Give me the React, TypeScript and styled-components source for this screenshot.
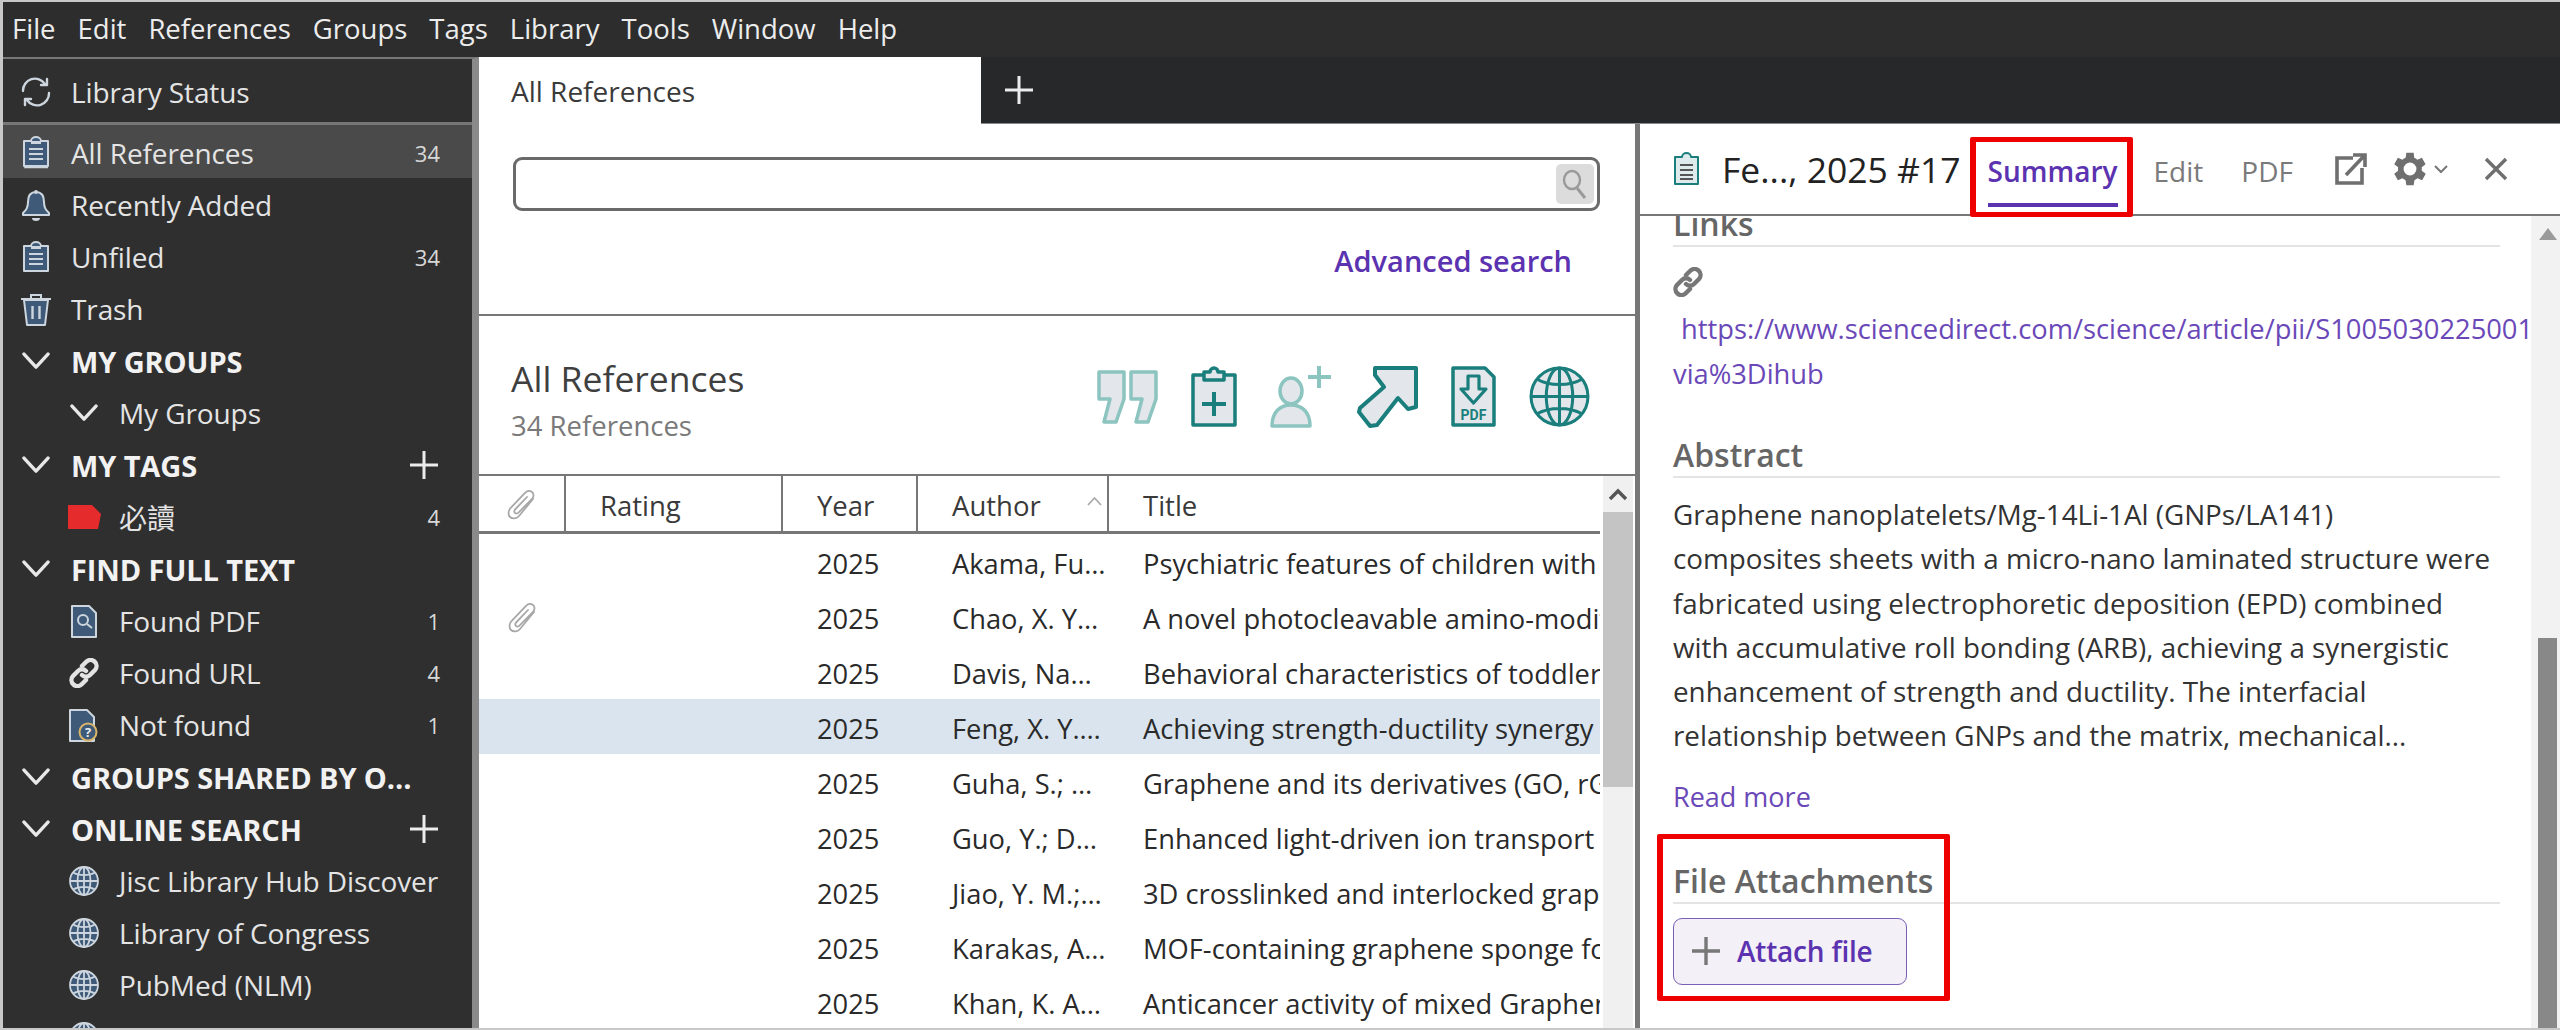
import React from 'react';
import styled, { createGlobalStyle } from 'styled-components';

const FONT = '"Open Sans", "Noto Sans", "Noto Sans CJK TC", sans-serif';
const PURPLE = '#5b33b0';
const COLUMNS = '87px 217px 135px 191px 491px';

const GlobalStyle = createGlobalStyle`
  html, body { margin: 0; padding: 0; background: #fff; }
  body { font-family: ${FONT}; overflow: hidden; }
  * { box-sizing: border-box; }
`;

const Frame = styled.div`
  width: 2560px;
  height: 1030px;
  overflow: hidden;
  display: flex;
  flex-direction: column;
  border-top: 2px solid #c8c8c8;
  border-left: 3px solid #c8c8c8;
  border-bottom: 2px solid #c8c8c8;
`;

const MenuBar = styled.div`
  height: 55px;
  flex: none;
  background: #2d2d2d;
  display: flex;
  align-items: center;
  padding: 0 0 3px 9px;
  gap: 22px;
`;

const MenuItem = styled.span`
  color: #ececec;
  font-size: 27.5px;
`;

const Body = styled.div`
  flex: 1;
  display: flex;
  min-height: 0;
`;

// --- Sidebar ---

const Sidebar = styled.aside`
  width: 476px;
  flex: none;
  background: #2f2f2f;
  border-top: 2px solid #777;
  border-right: 7px solid #8a8a8a;
  overflow: hidden;
`;

const StatusRow = styled.div`
  height: 66px;
  display: flex;
  align-items: center;
  padding-top: 2px;
  border-bottom: 3px solid #777;
`;

const SideRow = styled.div<{ $level?: number; $active?: boolean }>`
  height: ${(p) => (p.$active ? 53 : 52)}px;
  display: flex;
  align-items: center;
  padding-top: 2px;
  padding-left: ${(p) => (p.$level ? 48 : 0)}px;
  background: ${(p) => (p.$active ? '#4a4a4a' : 'transparent')};
`;

const IconSlot = styled.span`
  width: 68px;
  flex: none;
  display: flex;
  justify-content: center;
  padding-right: 2px;
  svg { display: block; }
`;

const SideLabel = styled.span<{ $section?: boolean }>`
  flex: 1;
  min-width: 0;
  white-space: nowrap;
  color: ${(p) => (p.$section ? '#f2f2f2' : '#e4e4e4')};
  font-size: ${(p) => (p.$section ? 29 : 28)}px;
  font-weight: ${(p) => (p.$section ? 700 : 400)};
  letter-spacing: -0.1px;
`;

const SideCount = styled.span`
  width: 60px;
  flex: none;
  margin-right: 32px;
  text-align: right;
  color: #d8d8d8;
  font-size: 22px;
`;

const SidePlus = styled.span`
  flex: none;
  margin-right: 34px;
  display: flex;
`;

// --- Main area ---

const Main = styled.main`
  flex: 1;
  min-width: 0;
  display: flex;
  flex-direction: column;
`;

const TabBar = styled.div`
  height: 67px;
  flex: none;
  display: flex;
  align-items: center;
  background: #26282a;
  border-bottom: 1px solid #8a8a8a;
`;

const Tab = styled.div`
  width: 502px;
  height: 67px;
  background: #fff;
  display: flex;
  align-items: center;
  padding: 2px 0 0 32px;
  color: #3a3a3a;
  font-size: 28px;
`;

const NewTab = styled.span`
  margin-left: 24px;
  display: flex;
`;

const Panes = styled.div`
  flex: 1;
  min-height: 0;
  display: flex;
`;

const ListPane = styled.section`
  width: 1161px;
  flex: none;
  display: flex;
  flex-direction: column;
  border-right: 5px solid #777;
`;

const SearchArea = styled.div`
  height: 192px;
  flex: none;
  padding: 33px 35px 0 34px;
  border-bottom: 2px solid #777;
  display: flex;
  flex-direction: column;
`;

const SearchBox = styled.div`
  height: 54px;
  border: 3px solid #6a6a6a;
  border-radius: 9px;
  display: flex;
  justify-content: flex-end;
  align-items: center;
  padding-right: 3px;
`;

const SearchButton = styled.span`
  width: 38px;
  height: 40px;
  background: #dcdcdc;
  border-radius: 5px;
  display: flex;
  align-items: center;
  justify-content: center;
`;

const AdvancedLink = styled.a`
  align-self: flex-end;
  margin: 30px 28px 0 0;
  color: ${PURPLE};
  font-size: 29px;
  font-weight: 600;
`;

const ListHeading = styled.div`
  height: 158px;
  flex: none;
  display: flex;
  align-items: flex-start;
  justify-content: space-between;
  padding: 40px 45px 0 32px;
`;

const ListTitle = styled.div`
  color: #3f3f3f;
  font-size: 35.5px;
  line-height: 44px;
`;

const ListSub = styled.div`
  margin-top: 9px;
  color: #7a7a7a;
  font-size: 27.5px;
  line-height: 34px;
`;

const ActionIcons = styled.div`
  display: flex;
  align-items: center;
  gap: 33px;
  margin-top: 9px;
  svg { display: block; }
`;

const ArrowSlot = styled.span`
  margin-left: -10px;
`;

const TableArea = styled.div`
  flex: 1;
  min-height: 0;
  display: flex;
  border-top: 2px solid #777;
`;

const Table = styled.div`
  width: 1121px;
  flex: none;
  overflow: hidden;
`;

const HeaderRow = styled.div`
  height: 58px;
  display: grid;
  grid-template-columns: ${COLUMNS};
  border-bottom: 3px solid #777;
`;

const HeaderCell = styled.div<{ $last?: boolean; $pad?: number }>`
  display: flex;
  align-items: center;
  justify-content: ${(p) => (p.$pad ? 'flex-start' : 'center')};
  padding: 3px 0 0 ${(p) => p.$pad ?? 0}px;
  position: relative;
  border-right: ${(p) => (p.$last ? 'none' : '2px solid #777')};
  color: #3a3a3a;
  font-size: 27.5px;
`;

const SortMark = styled.span`
  position: absolute;
  right: 5px;
  top: 20px;
  display: flex;
`;

const DataRow = styled.div<{ $selected?: boolean }>`
  height: 55px;
  display: grid;
  grid-template-columns: ${COLUMNS};
  align-items: center;
  padding-top: 3px;
  background: ${(p) => (p.$selected ? '#d9e4ee' : 'transparent')};
  color: #2a2a2a;
  font-size: 27.3px;
`;

const Cell = styled.div<{ $pad?: number; $center?: boolean }>`
  white-space: nowrap;
  overflow: hidden;
  padding-left: ${(p) => p.$pad ?? 0}px;
  display: ${(p) => (p.$center ? 'flex' : 'block')};
  justify-content: center;
`;

const ListScroll = styled.div`
  flex: 1;
  margin-left: 3px;
  margin-right: 2px;
  background: #f0f0f0;
  display: flex;
  flex-direction: column;
  align-items: stretch;
`;

const ScrollUp = styled.div`
  height: 36px;
  flex: none;
  display: flex;
  align-items: center;
  justify-content: center;
`;

const ListThumb = styled.div`
  height: 275px;
  background: #c4c4c4;
`;

// --- Detail panel ---

const DetailPane = styled.section`
  flex: 1;
  min-width: 0;
  display: flex;
  flex-direction: column;
`;

const DetailHeader = styled.header`
  height: 92px;
  flex: none;
  display: flex;
  align-items: center;
  border-bottom: 2px solid #777;
  padding-left: 33px;
`;

const DetailTitle = styled.span`
  margin: 0 27px 0 22px;
  color: #222;
  font-size: 35.5px;
  white-space: nowrap;
`;

const DetailTab = styled.a<{ $active?: boolean }>`
  position: relative;
  height: 90px;
  display: flex;
  align-items: center;
  padding-top: 3px;
  color: ${(p) => (p.$active ? PURPLE : '#7a7a7a')};
  font-size: 28px;
  font-weight: ${(p) => (p.$active ? 600 : 400)};
  margin-right: ${(p) => (p.$active ? 36 : 38)}px;
  &::after {
    content: '';
    display: ${(p) => (p.$active ? 'block' : 'none')};
    position: absolute;
    left: 0;
    right: 0;
    bottom: 7px;
    height: 4px;
    background: ${PURPLE};
  }
`;

const SummaryMark = styled.span`
  position: absolute;
  left: -18px;
  right: -15px;
  top: 13px;
  bottom: -3px;
  border: solid #ee0000;
  border-width: 5px 6px;
  border-radius: 2px;
`;

const HeaderTools = styled.div`
  display: flex;
  align-items: center;
  margin-left: 4px;
  svg { display: block; }
`;

const GearSlot = styled.span`
  margin: 0 2px 0 21px;
`;

const CloseSlot = styled.span`
  margin-left: 36px;
`;

const DetailBody = styled.div`
  flex: 1;
  min-height: 0;
  display: flex;
`;

const DetailContent = styled.div`
  flex: 1;
  min-width: 0;
  overflow: hidden;
  padding: 0 31px 0 33px;
`;

const SectionHead = styled.h3<{ $top: number }>`
  margin: ${(p) => p.$top}px 0 0;
  height: 45px;
  line-height: 44px;
  border-bottom: 2px solid #e4e4e4;
  color: #666;
  font-size: 32px;
  font-weight: 600;
  white-space: nowrap;
`;

const LinkIconRow = styled.div`
  margin-top: 20px;
  height: 32px;
  svg { display: block; }
`;

const UrlText = styled.div`
  margin: 7px -31px 0 0;
  padding-left: 8px;
  height: 45px;
  line-height: 45px;
  overflow: hidden;
  white-space: nowrap;
  color: #6a48b8;
  font-size: 27.3px;
`;

const UrlTail = styled(UrlText)`
  margin-top: 0;
  padding-left: 0;
`;

const AbstractText = styled.div`
  margin-top: 14px;
  color: #333;
  font-size: 27.8px;
  line-height: 44.3px;
`;

const AbstractLine = styled.div`
  white-space: nowrap;
`;

const ReadMore = styled.a`
  display: block;
  margin-top: 17px;
  height: 44px;
  line-height: 44px;
  color: #6a48b8;
  font-size: 27px;
`;

const AttachSection = styled.div`
  position: relative;
`;

const AttachMark = styled.span`
  position: absolute;
  left: -16px;
  top: -25px;
  width: 293px;
  height: 167px;
  border: solid #ee0000;
  border-width: 5px 6px;
  border-radius: 2px;
`;

const AttachButton = styled.button`
  margin-top: 14px;
  width: 234px;
  height: 67px;
  display: flex;
  align-items: center;
  gap: 17px;
  padding: 0 0 0 18px;
  background: #f3f0f7;
  border: 1.5px solid #7a5fb5;
  border-radius: 9px;
  color: ${PURPLE};
  font-family: ${FONT};
  font-size: 28px;
  font-weight: 600;
  letter-spacing: -0.2px;
`;

const DetailScroll = styled.div`
  width: 29px;
  flex: none;
  background: #f2f2f2;
  display: flex;
  flex-direction: column;
  padding-left: 7px;
  padding-right: 3px;
`;

const ScrollSpace = styled.div`
  height: 422px;
  flex: none;
  padding-top: 12px;
  display: flex;
  justify-content: center;
  align-items: flex-start;
`;

const DetailThumb = styled.div`
  flex: 1;
  background: #888;
`;

// --- Icons ---

const NAVY = '#3f5a78';
const PALE = '#cdd6de';

const ClipboardIcon = ({ stacked }: { stacked?: boolean }) => (
  <svg width="28" height="33" viewBox="0 0 28 33">
    {stacked && <path d="M3 30v1.500h23" fill="none" stroke={PALE} strokeWidth="1.500" />}
    <path d="M2 5h7a5 4 0 0 1 10 0h7v25H2z" fill={NAVY} stroke={PALE} strokeWidth="2" strokeLinejoin="round" />
    <path d="M9 5h10v3H9z" fill={PALE} />
    <path d="M7 13h14M7 18h14M7 23h14" stroke={PALE} strokeWidth="2" />
  </svg>
);

const SyncIcon = () => (
  <svg width="30" height="30" viewBox="0 0 30 30" fill="none" stroke={PALE} strokeWidth="2.400" strokeLinecap="round">
    <path d="M2 14A12 12 0 0 1 24 7" />
    <path d="M26 2v6h-6" strokeLinejoin="round" />
    <path d="M28 16A12 12 0 0 1 6 23" />
    <path d="M4 28v-6h6" strokeLinejoin="round" />
  </svg>
);

const BellIcon = () => (
  <svg width="30" height="33" viewBox="0 0 30 33">
    <path d="M15 3c6 0 8 5 8 10 0 6 2 8 5 11v2H2v-2c3-3 5-5 5-11C7 8 9 3 15 3z" fill={NAVY} stroke={PALE} strokeWidth="2" strokeLinejoin="round" />
    <circle cx="15" cy="3" r="2" fill={PALE} />
    <path d="M11 29h8a4 3 0 0 1-8 0z" fill={PALE} />
  </svg>
);

const TrashIcon = () => (
  <svg width="32" height="33" viewBox="0 0 32 33">
    <path d="M4 7l3 25h18l3-25z" fill={NAVY} stroke={PALE} strokeWidth="2" strokeLinejoin="round" />
    <path d="M1 6h30M11 5V2h10v3" fill="none" stroke={PALE} strokeWidth="2" />
    <path d="M12.500 13v13M19.500 13v13" stroke={PALE} strokeWidth="2.400" />
  </svg>
);

const Chevron = ({ size = 28 }: { size?: number }) => (
  <svg width={size} height={size * 0.65} viewBox="0 0 28 18" fill="none" stroke="#e8e8e8" strokeWidth="3.400" strokeLinecap="round" strokeLinejoin="round">
    <path d="M2 2l12 13L26 2" />
  </svg>
);

const Plus = ({ size = 28, color = '#ececec', weight = 3 }: { size?: number; color?: string; weight?: number }) => (
  <svg width={size} height={size} viewBox="0 0 28 28" stroke={color} strokeWidth={weight}>
    <path d="M14 0v28M0 14h28" />
  </svg>
);

const TagIcon = () => (
  <svg width="33" height="24" viewBox="0 0 33 24">
    <path d="M0 0h24l9 9-3 15H0z" fill="#e52b2b" />
  </svg>
);

const FoundPdfIcon = () => (
  <svg width="26" height="33" viewBox="0 0 26 33">
    <path d="M1 1h17l7 7v24H1z" fill={NAVY} stroke={PALE} strokeWidth="2" strokeLinejoin="round" />
    <circle cx="12" cy="15" r="5" fill="none" stroke={PALE} strokeWidth="2" />
    <path d="M16 19l5 4" stroke={PALE} strokeWidth="2" />
  </svg>
);

const LinkIcon = ({ color = '#e4e4e4', size = 30 }: { color?: string; size?: number }) => (
  <svg width={size} height={size} viewBox="0 0 30 30" fill="none" stroke={color} strokeWidth="4.400" strokeLinecap="round">
    <path d="M13 8l4-4a5.600 5.600 0 0 1 9 8l-5 5a5.600 5.600 0 0 1-8 0" />
    <path d="M17 22l-4 4a5.600 5.600 0 0 1-9-8l5-5a5.600 5.600 0 0 1 8 0" />
  </svg>
);

const NotFoundIcon = () => (
  <svg width="30" height="33" viewBox="0 0 30 33">
    <path d="M1 1h17l7 7v24H1z" fill={NAVY} stroke={PALE} strokeWidth="2" strokeLinejoin="round" />
    <circle cx="19" cy="23" r="8.500" fill={NAVY} stroke="#d8b56a" strokeWidth="2" />
    <text x="19" y="28" textAnchor="middle" fontSize="13" fontWeight="700" fill="#eee" fontFamily={FONT}>?</text>
  </svg>
);

const GlobeIcon = ({ size = 30, fill = NAVY, stroke = PALE, weight = 1.8 }: { size?: number; fill?: string; stroke?: string; weight?: number }) => (
  <svg width={size} height={size} viewBox="0 0 30 30" fill="none" stroke={stroke} strokeWidth={weight}>
    <circle cx="15" cy="15" r="14" fill={fill} />
    <ellipse cx="15" cy="15" rx="6.500" ry="14" />
    <path d="M15 1v28M1 15h28M4 6.500c6 3.500 16 3.500 22 0M4 23.500c6-3.500 16-3.500 22 0" />
  </svg>
);

const TEAL = '#1a7f7c';
const TEAL_FADED = '#8cc4c0';
const ICON_FILL = '#e3e6ea';

const QuoteAction = () => (
  <svg width="61" height="54" viewBox="0 0 61 54" fill={ICON_FILL} stroke={TEAL_FADED} strokeWidth="3.500" strokeLinejoin="round">
    <path d="M2 2h25v27l-8 23H7l6-23H2z" />
    <path d="M34 2h25v27l-8 23H39l6-23H34z" />
  </svg>
);

const ClipboardAction = () => (
  <svg width="46" height="61" viewBox="0 0 46 61" fill={ICON_FILL} stroke={TEAL} strokeWidth="3.500" strokeLinejoin="round">
    <path d="M2 9h42v50H2z" />
    <path d="M13 14V6h6a4 4 0 0 1 8 0h6v8z" />
    <path d="M23 26v24M11 38h24" fill="none" strokeWidth="4" />
  </svg>
);

const UserAction = () => (
  <svg width="64" height="63" viewBox="0 0 64 63" fill={ICON_FILL} stroke={TEAL_FADED} strokeWidth="3.500">
    <ellipse cx="21" cy="26" rx="11" ry="13" />
    <path d="M2 61c0-14 8-21 19-21s19 7 19 21z" strokeLinejoin="round" />
    <path d="M49 1v22M38 12h23" fill="none" strokeWidth="4" />
  </svg>
);

const ArrowAction = () => (
  <svg width="61" height="62" viewBox="0 0 61 62" fill={ICON_FILL} stroke={TEAL} strokeWidth="4" strokeLinejoin="round">
    <path d="M18 2h41v39l-8 2-10-11-21 27-7 1-11-14 1-4 24-21-9-12z" />
  </svg>
);

const PdfAction = () => (
  <svg width="45" height="61" viewBox="0 0 45 61">
    <path d="M2 2h32l9 9v48H2z" fill={ICON_FILL} stroke={TEAL} strokeWidth="3.500" strokeLinejoin="round" />
    <path d="M17 10h11v13h7L22.500 37 10 23h7z" fill={ICON_FILL} stroke={TEAL} strokeWidth="3.200" strokeLinejoin="round" />
    <text x="22.500" y="54" textAnchor="middle" fontSize="14" fontWeight="700" fill={TEAL} fontFamily="Roboto, sans-serif">PDF</text>
  </svg>
);

const SearchGlyph = () => (
  <svg width="26" height="30" viewBox="0 0 26 30" fill="none" stroke="#9a9a9a" strokeWidth="2.400">
    <ellipse cx="10" cy="11" rx="8" ry="9" />
    <path d="M15 19l8 10" strokeWidth="3" />
  </svg>
);

const Paperclip = () => (
  <svg width="30" height="30" viewBox="0 0 30 30" fill="none" stroke="#a8a8a8" strokeWidth="1.800" strokeLinecap="round">
    <path d="M26 9L12 26c-2.500 3-7 3-9 1s-2-6 .5-9L18 3c2-2.500 5-2.500 7-1s2 4.500 0 7L12 22c-1.500 1.800-3 1.800-4 1s-1-2.500.5-4L20 7" />
  </svg>
);

const ExternalIcon = () => (
  <svg width="32" height="32" viewBox="0 0 32 32" fill="none" stroke="#6f6f6f" strokeWidth="3.600">
    <path d="M18 5H2v25h25V15" />
    <path d="M11 22L29 3M18 2h12v12" strokeLinejoin="miter" />
  </svg>
);

const GearIcon = () => (
  <svg width="44" height="44" viewBox="0 0 24 24" fill="#6f6f6f">
    <path d="M19.400 13a7.500 7.500 0 0 0 0-2l2.100-1.600-2-3.500-2.500 1a7.500 7.500 0 0 0-1.700-1L15 3.200h-4l-.4 2.700a7.500 7.500 0 0 0-1.700 1l-2.500-1-2 3.500L6.500 11a7.500 7.500 0 0 0 0 2l-2.100 1.600 2 3.500 2.500-1a7.500 7.500 0 0 0 1.700 1l.4 2.700h4l.4-2.700a7.500 7.500 0 0 0 1.700-1l2.500 1 2-3.500zM13 15.500a3.500 3.500 0 1 1 0-7 3.500 3.500 0 0 1 0 7z" transform="translate(-1 0)" />
  </svg>
);

const SmallChevron = () => (
  <svg width="14" height="10" viewBox="0 0 14 10" fill="none" stroke="#777" strokeWidth="2">
    <path d="M1 2l6 6 6-6" />
  </svg>
);

const CloseIcon = () => (
  <svg width="24" height="24" viewBox="0 0 24 24" stroke="#6f6f6f" strokeWidth="3.400">
    <path d="M2 2l20 20M22 2L2 22" />
  </svg>
);

const HeaderClipboard = () => (
  <svg width="27" height="34" viewBox="0 0 27 34">
    <path d="M2 5h7a4.500 4 0 0 1 9 0h7v27H2z" fill="#dfeaec" stroke={TEAL} strokeWidth="2" strokeLinejoin="round" />
    <path d="M7 13h13M7 18h13M7 23h13M7 27h13" stroke="#555" strokeWidth="1.800" />
  </svg>
);

const UpTriangle = () => (
  <svg width="18" height="12" viewBox="0 0 18 12" fill="#9a9a9a">
    <path d="M9 0l9 12H0z" />
  </svg>
);

const UpCaret = () => (
  <svg width="20" height="13" viewBox="0 0 20 13" fill="none" stroke="#555" strokeWidth="3.400">
    <path d="M2 11l8-8 8 8" />
  </svg>
);

const SortCaret = () => (
  <svg width="15" height="10" viewBox="0 0 15 10" fill="none" stroke="#aaa" strokeWidth="1.800">
    <path d="M1 9l6.500-7L14 9" />
  </svg>
);

// --- Data ---

type SideItem = { label: string; icon: React.ReactNode; count?: number; level?: number; section?: boolean; add?: boolean; active?: boolean };

const sideItems: SideItem[] = [
  { label: 'All References', icon: <ClipboardIcon stacked />, count: 34, active: true },
  { label: 'Recently Added', icon: <BellIcon /> },
  { label: 'Unfiled', icon: <ClipboardIcon />, count: 34 },
  { label: 'Trash', icon: <TrashIcon /> },
  { label: 'MY GROUPS', icon: <Chevron />, section: true },
  { label: 'My Groups', icon: <Chevron />, level: 1 },
  { label: 'MY TAGS', icon: <Chevron />, section: true, add: true },
  { label: '必讀', icon: <TagIcon />, count: 4, level: 1 },
  { label: 'FIND FULL TEXT', icon: <Chevron />, section: true },
  { label: 'Found PDF', icon: <FoundPdfIcon />, count: 1, level: 1 },
  { label: 'Found URL', icon: <LinkIcon />, count: 4, level: 1 },
  { label: 'Not found', icon: <NotFoundIcon />, count: 1, level: 1 },
  { label: 'GROUPS SHARED BY O…', icon: <Chevron />, section: true },
  { label: 'ONLINE SEARCH', icon: <Chevron />, section: true, add: true },
  { label: 'Jisc Library Hub Discover', icon: <GlobeIcon />, level: 1 },
  { label: 'Library of Congress', icon: <GlobeIcon />, level: 1 },
  { label: 'PubMed (NLM)', icon: <GlobeIcon />, level: 1 },
  { label: '', icon: <GlobeIcon />, level: 1 },
];

const menus = ['File', 'Edit', 'References', 'Groups', 'Tags', 'Library', 'Tools', 'Window', 'Help'];

const rows = [
  { author: 'Akama, Fu…', title: 'Psychiatric features of children with autism' },
  { author: 'Chao, X. Y…', title: 'A novel photocleavable amino-modified polymer', clip: true },
  { author: 'Davis, Na…', title: 'Behavioral characteristics of toddlers with' },
  { author: 'Feng, X. Y.…', title: 'Achieving strength-ductility synergy in graphene', selected: true },
  { author: 'Guha, S.; …', title: 'Graphene and its derivatives (GO, rGO) in' },
  { author: 'Guo, Y.; D…', title: 'Enhanced light-driven ion transport through' },
  { author: 'Jiao, Y. M.;…', title: '3D crosslinked and interlocked graphene' },
  { author: 'Karakas, A…', title: 'MOF-containing graphene sponge for water' },
  { author: 'Khan, K. A…', title: 'Anticancer activity of mixed Graphene oxide' },
];

const abstractLines = [
  'Graphene nanoplatelets/Mg-14Li-1Al (GNPs/LA141)',
  'composites sheets with a micro-nano laminated structure were',
  'fabricated using electrophoretic deposition (EPD) combined',
  'with accumulative roll bonding (ARB), achieving a synergistic',
  'enhancement of strength and ductility. The interfacial',
  'relationship between GNPs and the matrix, mechanical...',
];

const App = () => (
  <>
    <GlobalStyle />
    <Frame>
      <MenuBar>
        {menus.map((m) => (
          <MenuItem key={m}>{m}</MenuItem>
        ))}
      </MenuBar>
      <Body>
        <Sidebar>
          <StatusRow>
            <IconSlot><SyncIcon /></IconSlot>
            <SideLabel>Library Status</SideLabel>
          </StatusRow>
          {sideItems.map((item, i) => (
            <SideRow key={i} $level={item.level} $active={item.active}>
              <IconSlot>{item.icon}</IconSlot>
              <SideLabel $section={item.section}>{item.label}</SideLabel>
              {item.count !== undefined && <SideCount>{item.count}</SideCount>}
              {item.add && <SidePlus><Plus /></SidePlus>}
            </SideRow>
          ))}
        </Sidebar>
        <Main>
          <TabBar>
            <Tab>All References</Tab>
            <NewTab><Plus /></NewTab>
          </TabBar>
          <Panes>
            <ListPane>
              <SearchArea>
                <SearchBox>
                  <SearchButton><SearchGlyph /></SearchButton>
                </SearchBox>
                <AdvancedLink>Advanced search</AdvancedLink>
              </SearchArea>
              <ListHeading>
                <div>
                  <ListTitle>All References</ListTitle>
                  <ListSub>34 References</ListSub>
                </div>
                <ActionIcons>
                  <QuoteAction />
                  <ClipboardAction />
                  <UserAction />
                  <ArrowSlot><ArrowAction /></ArrowSlot>
                  <PdfAction />
                  <GlobeIcon size={61} fill={ICON_FILL} stroke={TEAL} weight={1.5} />
                </ActionIcons>
              </ListHeading>
              <TableArea>
                <Table>
                  <HeaderRow>
                    <HeaderCell><Paperclip /></HeaderCell>
                    <HeaderCell $pad={34}>Rating</HeaderCell>
                    <HeaderCell $pad={34}>Year</HeaderCell>
                    <HeaderCell $pad={34}>
                      Author
                      <SortMark><SortCaret /></SortMark>
                    </HeaderCell>
                    <HeaderCell $pad={34} $last>Title</HeaderCell>
                  </HeaderRow>
                  {rows.map((r) => (
                    <DataRow key={r.author} $selected={r.selected}>
                      <Cell $center>{r.clip && <Paperclip />}</Cell>
                      <Cell />
                      <Cell $pad={34}>2025</Cell>
                      <Cell $pad={34}>{r.author}</Cell>
                      <Cell $pad={34}>{r.title}</Cell>
                    </DataRow>
                  ))}
                </Table>
                <ListScroll>
                  <ScrollUp><UpCaret /></ScrollUp>
                  <ListThumb />
                </ListScroll>
              </TableArea>
            </ListPane>
            <DetailPane>
              <DetailHeader>
                <HeaderClipboard />
                <DetailTitle>Fe..., 2025 #17</DetailTitle>
                <DetailTab $active>
                  Summary
                  <SummaryMark />
                </DetailTab>
                <DetailTab>Edit</DetailTab>
                <DetailTab>PDF</DetailTab>
                <HeaderTools>
                  <ExternalIcon />
                  <GearSlot><GearIcon /></GearSlot>
                  <SmallChevron />
                  <CloseSlot><CloseIcon /></CloseSlot>
                </HeaderTools>
              </DetailHeader>
              <DetailBody>
                <DetailContent>
                  <SectionHead $top={-14}>Links</SectionHead>
                  <LinkIconRow><LinkIcon color="#777" size={30} /></LinkIconRow>
                  <UrlText>https://www.sciencedirect.com/science/article/pii/S1005030225001234</UrlText>
                  <UrlTail>via%3Dihub</UrlTail>
                  <SectionHead $top={37}>Abstract</SectionHead>
                  <AbstractText>
                    {abstractLines.map((l) => (
                      <AbstractLine key={l}>{l}</AbstractLine>
                    ))}
                  </AbstractText>
                  <ReadMore>Read more</ReadMore>
                  <AttachSection>
                    <AttachMark />
                    <SectionHead $top={40}>File Attachments</SectionHead>
                    <AttachButton>
                      <Plus color="#777" weight={3.4} />
                      Attach file
                    </AttachButton>
                  </AttachSection>
                </DetailContent>
                <DetailScroll>
                  <ScrollSpace><UpTriangle /></ScrollSpace>
                  <DetailThumb />
                </DetailScroll>
              </DetailBody>
            </DetailPane>
          </Panes>
        </Main>
      </Body>
    </Frame>
  </>
);

export default App;
